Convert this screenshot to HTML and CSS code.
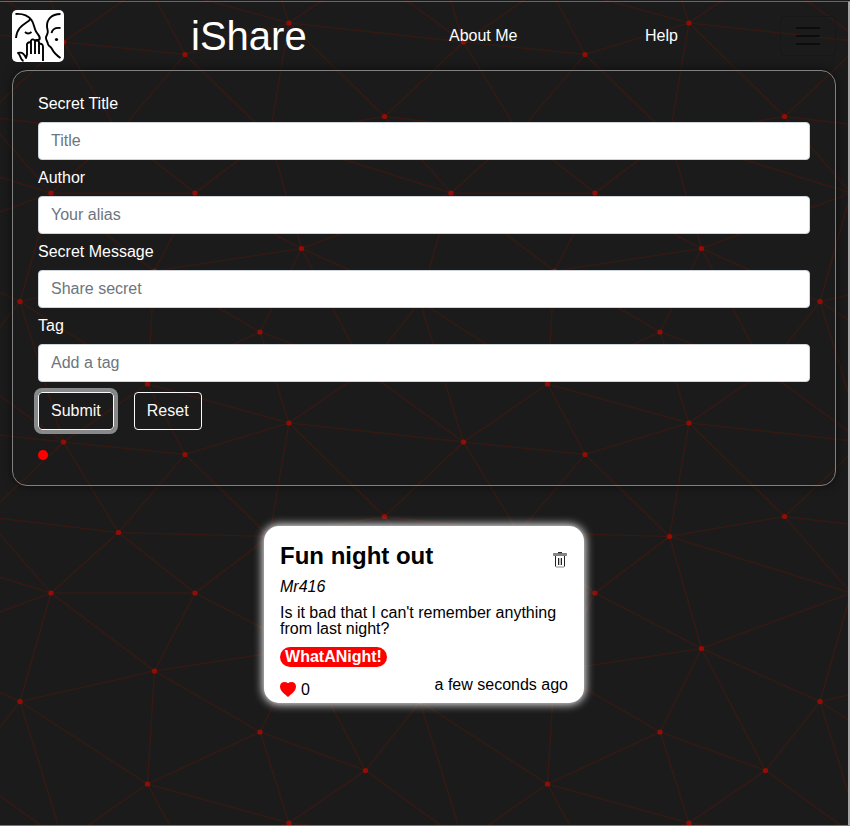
FILE: index.html
```
<!DOCTYPE html>
<html lang="en">
<head>
<meta charset="utf-8">
<title>iShare</title>
<link rel="stylesheet" href="styles.css">
</head>
<body>
<svg class="mesh" aria-hidden="true">
  <defs>
    <g id="net">
      <path class="edges" d="M63.5 42L185 54.5L289 23L463.5 42M63.5 42L118.5 132.5M185 54.5L118.5 132.5M185 54.5L269.5 136.5M289 23L384.5 116.5M289 23L269.5 136.5M384.5 116.5L463.5 42M384.5 116.5L269.5 136.5M384.5 116.5L518.5 132.5M384.5 116.5L451 193M118.5 132.5L269.5 136.5M118.5 132.5L51 193M118.5 132.5L195 193M269.5 136.5L195 193M269.5 136.5L451 193M269.5 136.5L301.5 248.5M51 193H195M51 193L20 301.5M51 193L154.5 271M195 193L154.5 271M195 193L301.5 248.5M301.5 248.5L154.5 271M301.5 248.5L260 332M301.5 248.5L365.5 370.5M301.5 248.5L420 301.5M301.5 248.5L451 193M154.5 271L20 301.5M154.5 271L260 332M154.5 271L147.5 384M420 301.5L365.5 370.5M20 301.5L147.5 384M20 301.5L63.5 442M260 332L147.5 384M260 332L365.5 370.5M260 332L289 423M365.5 370.5L289 423M365.5 370.5L463.5 442M147.5 384L289 423M147.5 384L185 454.5M147.5 384L63.5 442"/>
      <g class="nodes">
        <circle cx="63.5" cy="42" r="2.6"/><circle cx="185" cy="54.5" r="2.6"/><circle cx="289" cy="23" r="2.6"/><circle cx="384.5" cy="116.5" r="2.6"/><circle cx="118.5" cy="132.5" r="2.6"/><circle cx="269.5" cy="136.5" r="2.6"/><circle cx="51" cy="193" r="2.6"/><circle cx="195" cy="193" r="2.6"/><circle cx="301.5" cy="248.5" r="2.6"/><circle cx="154.5" cy="271" r="2.6"/><circle cx="20" cy="301.5" r="2.6"/><circle cx="260" cy="332" r="2.6"/><circle cx="365.5" cy="370.5" r="2.6"/><circle cx="147.5" cy="384" r="2.6"/>
      </g>
    </g>
    <pattern id="tile" width="400" height="400" patternUnits="userSpaceOnUse">
      <use href="#net" x="-400" y="-400"/><use href="#net" x="-400"/><use href="#net" y="-400"/><use href="#net"/>
    </pattern>
  </defs>
  <rect width="100%" height="100%" fill="url(#tile)"/>
</svg>
<div class="page">
  <header class="navbar">
    <svg class="logo" viewBox="0 0 52 52" role="img" aria-label="iShare logo">
      <path d="M3.500 4C10 3.500 16 5.500 19.500 10C22 13.500 22 18 24 21.500C26 25 29 26.500 27.500 29.500L23 31M18.500 9C15 14 5 15 4 28M13 22Q16 25 19.500 22M48.500 4C39 4 34.500 10 35 17C36 22 36.500 22 34 27C33.500 30 35.500 31 36 34C37 37 38.500 36 40 39C41.500 42 44 45 48.500 48M48.500 18Q41 17 39.500 23"/>
      <path d="M15 45V34Q17 31 19 33V44M19 33V30.500Q21 28 23 31V44M23 31Q25 28.500 27 32V44M27 34Q31 33 31 37V51M15 45L14 48C12 43 9 42 6 43C9 45 8 50 11.500 51"/>
      <circle cx="44.500" cy="29.500" r="1.600"/>
    </svg>
    <h1 class="brand">iShare</h1>
    <a class="about">About Me</a>
    <a class="help">Help</a>
    <button class="toggler" aria-label="Menu"><span></span><span></span><span></span></button>
  </header>
  <form class="secret-form">
    <label for="title">Secret Title</label><input id="title" placeholder="Title">
    <label for="author">Author</label><input id="author" placeholder="Your alias">
    <label for="message">Secret Message</label><input id="message" placeholder="Share secret">
    <label for="tag">Tag</label><input id="tag" placeholder="Add a tag">
    <div class="actions">
      <button type="button" class="btn focused">Submit</button>
      <button type="button" class="btn">Reset</button>
    </div>
    <span class="status"></span>
  </form>
  <article class="card">
    <div class="card-head">
      <h2>Fun night out</h2>
      <svg class="trash" viewBox="0 0 14 16"><path class="lid" d="M.5 1.500H13.500V3.500H.5z"/><path class="bin" d="M2.500 4V14.500M11.500 4V14.500M5.500 6V13M8.500 6V13"/><path class="base" d="M3 15H11M7 6V13"/><path class="handle" d="M5 .7H9"/></svg>
    </div>
    <p class="author">Mr416</p>
    <p class="message">Is it bad that I can't remember anything from last night?</p>
    <span class="tag">WhatANight!</span>
    <div class="card-foot">
      <span class="likes"><svg viewBox="0 0 16 15"><path d="M8 15C5 12 0 9.500 0 4.500C0 0 5-1 8 1.200C11-1 16 0 16 4.500C16 9.500 11 12 8 15z"/></svg>0</span>
      <time>a few seconds ago</time>
    </div>
  </article>
</div>
</body>
</html>
```
FILE: styles.css
```
* { box-sizing: border-box; }
body {
  margin: 0;
  height: 826px;
  overflow: hidden;
  background: #1b1b1b;
  color: #fff;
  font: 16px/24px "Liberation Sans", Arial, sans-serif;
}
h1, h2, p { margin: 0; }
.mesh { position: absolute; inset: 0; width: 100%; height: 100%; }
.edges { fill: none; stroke: #3a170f; stroke-width: 1.1; }
.nodes { fill: #930c06; }
.page {
  position: relative;
  height: 825px;
  margin-top: 1px;
  padding: 8px 12px 0;
  border-top: 1px solid #67676a;
  border-right: 2px solid #a5a5a5;
  border-bottom: 1px solid #777;
}
.navbar { display: flex; align-items: center; height: 52px; }
.logo { width: 52px; height: 52px; border-radius: 5px; background: #fff; fill: none; stroke: #000; stroke-width: 1.9; stroke-linejoin: round; }
.logo circle { fill: #000; stroke: none; }
.brand { width: 258px; margin-left: 127px; font-size: 40px; line-height: 48px; font-weight: 400; }
.about { width: 196px; }
.help { width: 135px; }
.toggler { display: flex; flex-direction: column; align-items: center; justify-content: center; gap: 6px; width: 56px; height: 40px; padding: 0; border: 1px solid #181818; border-radius: 4px; background: none; }
.toggler span { width: 24px; height: 2px; border-radius: 1px; background: #0c0c0c; }
.secret-form {
  display: flex;
  flex-direction: column;
  width: 824px;
  height: 416px;
  margin-top: 8px;
  padding: 21px 25px;
  border: 1px solid #808080;
  border-radius: 15px;
  box-shadow: 0 0 10px #0008;
}
.secret-form label { height: 24px; }
.secret-form input { height: 38px; margin: 6px 0; padding: 6px 12px; border: 1px solid #ced4da; border-radius: 4px; background: #fff; font: inherit; }
.secret-form input::placeholder { color: #6c757d; opacity: 1; }
.actions { display: flex; gap: 20px; margin-top: 4px; }
.btn { height: 38px; padding: 0 12px; border: 1px solid #f8f9fa; border-radius: 4px; background: none; color: #f8f9fa; font: inherit; }
.focused { box-shadow: 0 0 0 4px #88898a; }
.status { width: 10px; height: 10px; margin-top: 20px; border-radius: 50%; background: red; }
.card { width: 320px; height: 177px; margin: 40px auto 0; padding: 16px; border-radius: 15px; background: #fff; color: #000; line-height: 16px; box-shadow: 0 0 10px 1px #fff; }
.card-head { display: flex; justify-content: space-between; }
.card h2 { font-size: 24px; line-height: 28px; letter-spacing: 0; }
.trash { width: 14px; height: 16px; margin: 10px 1px 0 0; fill: none; stroke: #222; }
.trash .lid { fill: #888; stroke: #666; stroke-width: .7; }
.trash .base { stroke: #888; }
.trash .handle { stroke: #000; }
.author { margin-top: 9px; font-style: italic; }
.message { margin-top: 10px; }
.card .tag { display: block; width: 107px; height: 20px; margin-top: 10px; border-radius: 10px; background: red; color: #fff; font-weight: 700; line-height: 19px; text-align: center; }
.card-foot { display: flex; justify-content: space-between; margin-top: 10px; }
.likes { display: flex; gap: 5px; margin-top: 4px; line-height: 17px; }
.likes svg { width: 16px; height: 15px; margin-top: 1px; fill: red; }
```
